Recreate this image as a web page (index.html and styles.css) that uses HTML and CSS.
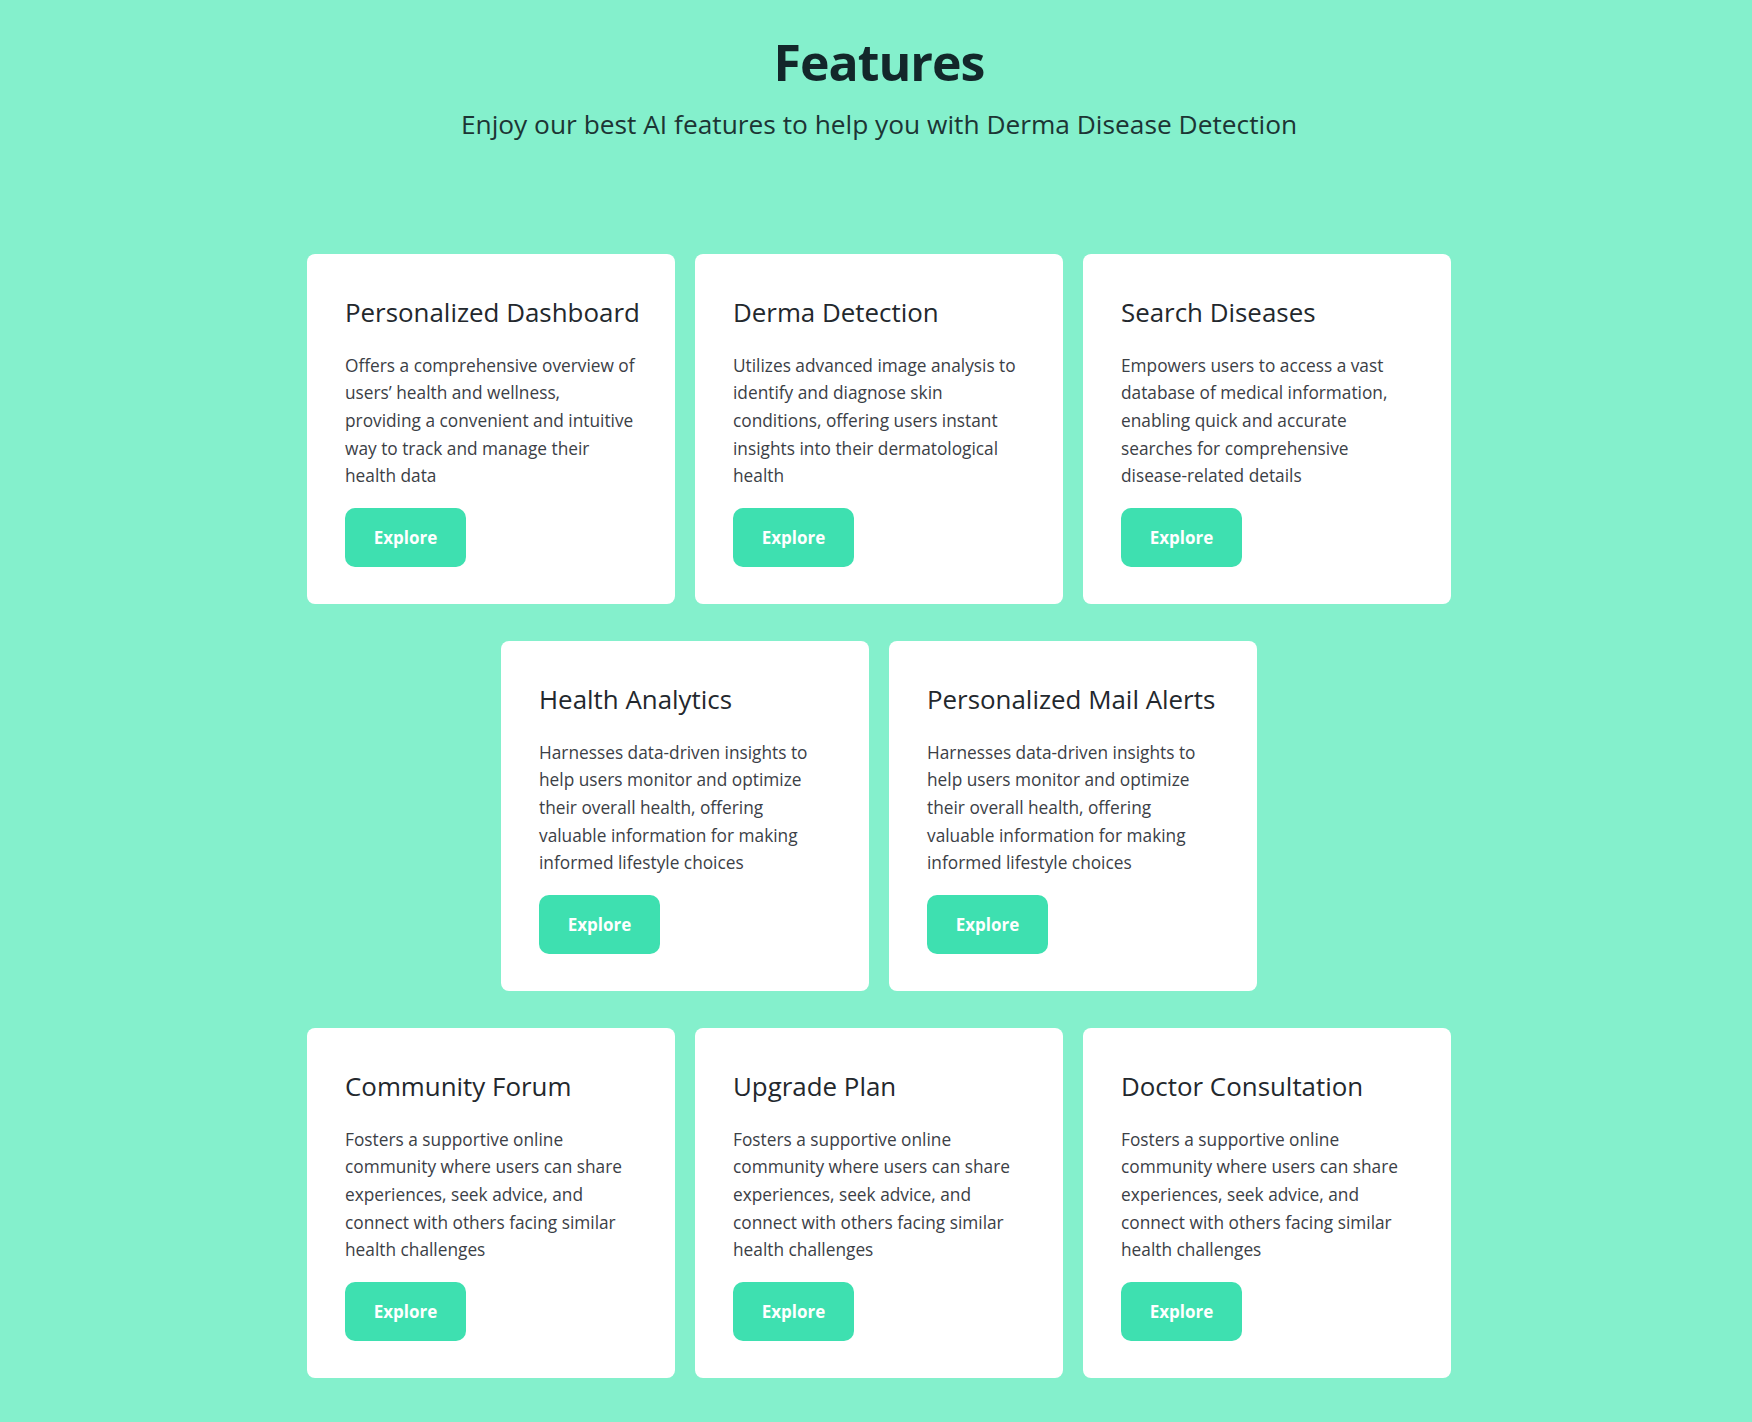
FILE: index.html
```html
<!DOCTYPE html>
<html lang="en">
<head>
<meta charset="utf-8">
<title>Features</title>
<link rel="stylesheet" href="styles.css">
</head>
<body>
<section class="features">
  <header class="features-head">
    <h1 class="features-title">Features</h1>
    <p class="features-sub">Enjoy our best AI features to help you with Derma Disease Detection</p>
  </header>
  <div class="rows">
    <div class="row">
      <article class="card">
        <h3 class="card-title">Personalized Dashboard</h3>
        <p class="card-text">Offers a comprehensive overview of<br>users’ health and wellness,<br>providing a convenient and intuitive<br>way to track and manage their<br>health data</p>
        <button class="btn">Explore</button>
      </article>
      <article class="card">
        <h3 class="card-title">Derma Detection</h3>
        <p class="card-text">Utilizes advanced image analysis to<br>identify and diagnose skin<br>conditions, offering users instant<br>insights into their dermatological<br>health</p>
        <button class="btn">Explore</button>
      </article>
      <article class="card">
        <h3 class="card-title">Search Diseases</h3>
        <p class="card-text">Empowers users to access a vast<br>database of medical information,<br>enabling quick and accurate<br>searches for comprehensive<br>disease-related details</p>
        <button class="btn">Explore</button>
      </article>
    </div>
    <div class="row">
      <article class="card">
        <h3 class="card-title">Health Analytics</h3>
        <p class="card-text">Harnesses data-driven insights to<br>help users monitor and optimize<br>their overall health, offering<br>valuable information for making<br>informed lifestyle choices</p>
        <button class="btn">Explore</button>
      </article>
      <article class="card">
        <h3 class="card-title">Personalized Mail Alerts</h3>
        <p class="card-text">Harnesses data-driven insights to<br>help users monitor and optimize<br>their overall health, offering<br>valuable information for making<br>informed lifestyle choices</p>
        <button class="btn">Explore</button>
      </article>
    </div>
    <div class="row">
      <article class="card">
        <h3 class="card-title">Community Forum</h3>
        <p class="card-text">Fosters a supportive online<br>community where users can share<br>experiences, seek advice, and<br>connect with others facing similar<br>health challenges</p>
        <button class="btn">Explore</button>
      </article>
      <article class="card">
        <h3 class="card-title">Upgrade Plan</h3>
        <p class="card-text">Fosters a supportive online<br>community where users can share<br>experiences, seek advice, and<br>connect with others facing similar<br>health challenges</p>
        <button class="btn">Explore</button>
      </article>
      <article class="card">
        <h3 class="card-title">Doctor Consultation</h3>
        <p class="card-text">Fosters a supportive online<br>community where users can share<br>experiences, seek advice, and<br>connect with others facing similar<br>health challenges</p>
        <button class="btn">Explore</button>
      </article>
    </div>
  </div>
</section>
</body>
</html>
```

FILE: styles.css
```css
html, body {
  margin: 0;
  padding: 0;
}

body {
  background: #84f0cc;
  font-family: "Open Sans", "Noto Sans", sans-serif;
  color: #212529;
  min-height: 1422px;
}

.features {
  padding: 31px 0 0 6px;
}

.features-head {
  text-align: center;
}

.features-title {
  margin: 0;
  font-size: 50px;
  font-weight: 700;
  letter-spacing: -1px;
  line-height: 62px;
  color: #13272a;
}

.features-sub {
  margin: 14px 0 0;
  font-size: 26.3px;
  line-height: 34px;
  color: #1c3534;
}

.rows {
  display: flex;
  flex-direction: column;
  gap: 37px;
  margin-top: 113px;
}

.row {
  display: flex;
  justify-content: center;
  gap: 20px;
}

.card {
  box-sizing: border-box;
  width: 368px;
  padding: 41px 38px 37px;
  background: #ffffff;
  border-radius: 8px;
}

.card-title {
  margin: 0;
  font-size: 25.9px;
  font-weight: 400;
  line-height: 34px;
  color: #23282d;
  white-space: nowrap;
}

.card-text {
  margin: 22.5px 0 0;
  font-size: 17.3px;
  line-height: 27.7px;
  color: #3b4046;
  white-space: nowrap;
}

.btn {
  display: block;
  margin-top: 18px;
  width: 121px;
  height: 59px;
  border: 0;
  border-radius: 10px;
  background: #3ee0b0;
  color: #ffffff;
  font-family: "Open Sans", "Noto Sans", sans-serif;
  font-size: 17px;
  font-weight: 700;
  cursor: pointer;
}
```
